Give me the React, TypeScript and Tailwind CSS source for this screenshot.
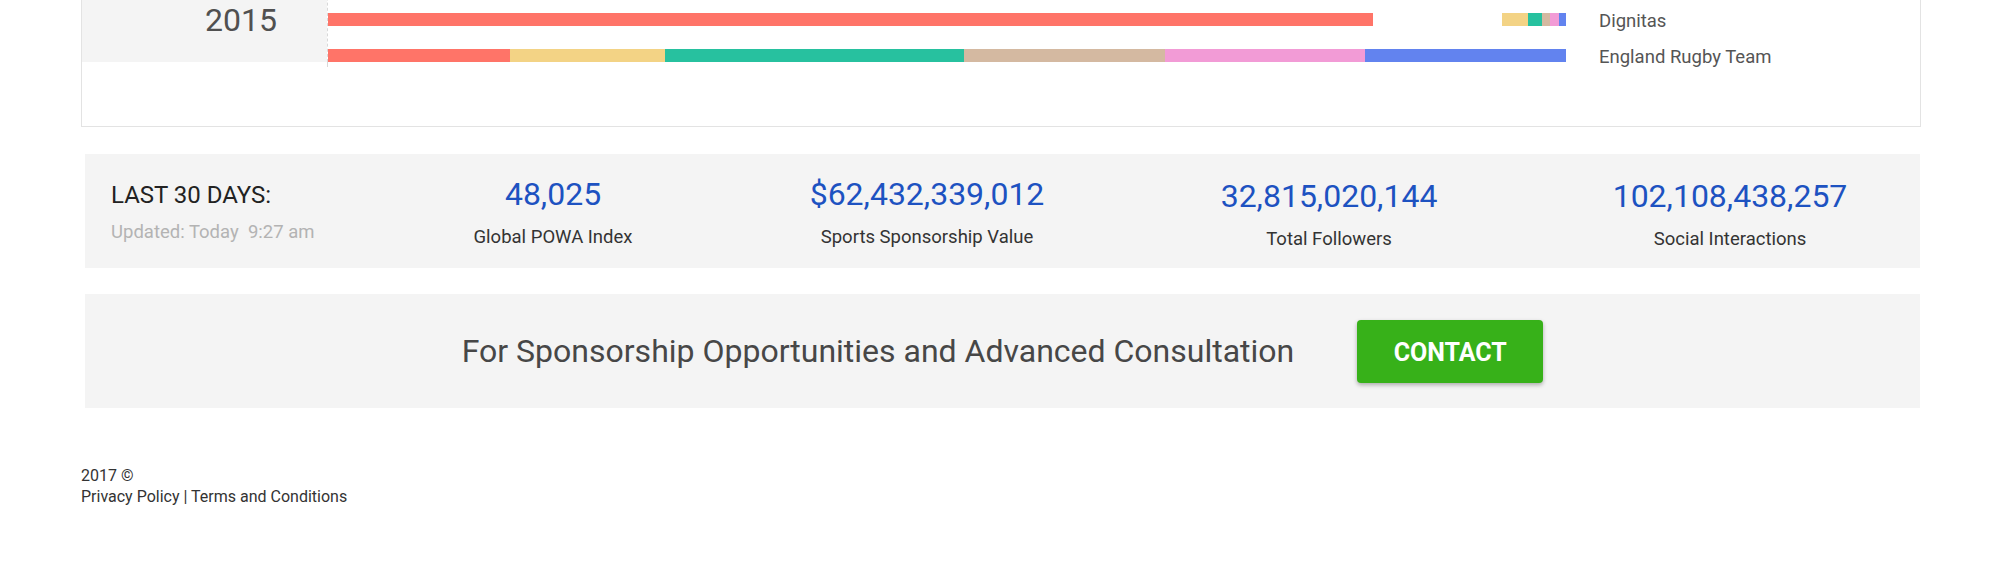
import React from "react";

type Seg = { w: number; color: string };

const RED = "#ff7468";
const YELLOW = "#f3d385";
const TEAL = "#27c19f";
const TAN = "#d4b9a1";
const PINK = "#f29bd6";
const BLUE = "#6283ef";

// last year row of the chart, only the bottom of it is in view
const bars: { label: string; segs: Seg[] }[] = [
  {
    label: "",
    segs: [
      { w: 420, color: RED },
      { w: 300, color: YELLOW },
      { w: 518, color: TEAL },
    ],
  },
  {
    label: "Dignitas",
    segs: [
      { w: 1045, color: RED },
      { w: 129, color: "transparent" },
      { w: 26, color: YELLOW },
      { w: 14, color: TEAL },
      { w: 8, color: TAN },
      { w: 9, color: PINK },
      { w: 7, color: BLUE },
    ],
  },
  {
    label: "England Rugby Team",
    segs: [
      { w: 182, color: RED },
      { w: 155, color: YELLOW },
      { w: 299, color: TEAL },
      { w: 201, color: TAN },
      { w: 200, color: PINK },
      { w: 201, color: BLUE },
    ],
  },
];

const stats = [
  { value: "48,025", label: "Global POWA Index", w: "w-[400px]", pt: "pt-[21px]" },
  { value: "$62,432,339,012", label: "Sports Sponsorship Value", w: "w-[348px]", pt: "pt-[21px]" },
  { value: "32,815,020,144", label: "Total Followers", w: "w-[456px]", pt: "pt-[23px]" },
  { value: "102,108,438,257", label: "Social Interactions", w: "w-[346px]", pt: "pt-[23px]" },
];

function Chart() {
  return (
    <div className="ml-[81px] -mt-[24px] w-[1840px] border border-[#e3e3e3] bg-white">
      <div className="flex">
        <div className="w-[245px] shrink-0 bg-[#f4f4f4] flex items-center justify-end pr-[50px]">
          <span className="text-[32px] leading-none text-[#505050]">2015</span>
        </div>
        <div className="flex flex-col gap-[23px] border-l border-dashed border-[#d8d8d8]">
          {bars.map((b, i) => (
            <div key={i} className="flex items-center h-[13px]">
              <div className="flex w-[1238px] h-[13px]">
                {b.segs.map((s, j) => (
                  <div
                    key={j}
                    className="h-full"
                    style={{ width: s.w, backgroundColor: s.color }}
                  />
                ))}
              </div>
              {b.label && (
                <span className="ml-[33px] mt-[3px] text-[18.5px] leading-none text-[#555] whitespace-nowrap">
                  {b.label}
                </span>
              )}
            </div>
          ))}
        </div>
      </div>
      <div className="flex">
        <div className="w-[245px]" />
        <div className="h-[5px] border-l border-dashed border-[#d8d8d8]" />
      </div>
      <div className="h-[59px]" />
    </div>
  );
}

function Stats() {
  return (
    <div className="ml-[85px] mt-[27px] w-[1835px] h-[114px] bg-[#f4f4f4] flex">
      <div className="w-[268px] shrink-0 pl-[26px] pt-[26px]">
        <div className="text-[24px] leading-[30px] text-[#222]">LAST 30 DAYS:</div>
        <div className="mt-[10px] text-[18.5px] leading-[24px] text-[#b3b3b3] whitespace-nowrap">
          Updated: Today{"\u00a0"} 9:27 am
        </div>
      </div>
      {stats.map((s) => (
        <div key={s.label} className={`${s.w} ${s.pt} shrink-0 text-center`}>
          <div className="text-[32px] leading-[38px] text-[#1d52c1]">{s.value}</div>
          <div className="mt-[12px] text-[18.5px] leading-[24px] text-[#333]">{s.label}</div>
        </div>
      ))}
    </div>
  );
}

export default function App() {
  return (
    <div className="w-[2000px] h-[565px] overflow-hidden bg-white font-['Roboto',sans-serif]">
      <Chart />
      <Stats />

      <div className="ml-[85px] mt-[26px] w-[1835px] h-[114px] bg-[#f4f4f4] flex items-center justify-center gap-[63px]">
        <span className="text-[32px] leading-none text-[#474747]">
          For Sponsorship Opportunities and Advanced Consultation
        </span>
        <button className="w-[186px] h-[63px] pt-[4px] rounded-[4px] bg-[#37b119] text-white text-[25px] font-bold shadow-[0_2px_4px_rgba(0,0,0,0.3)]">
          CONTACT
        </button>
      </div>

      <footer className="ml-[81px] mt-[57px] text-[16px] leading-[21px] text-[#333]">
        <div>2017 ©</div>
        <div>Privacy Policy | Terms and Conditions</div>
      </footer>
    </div>
  );
}
